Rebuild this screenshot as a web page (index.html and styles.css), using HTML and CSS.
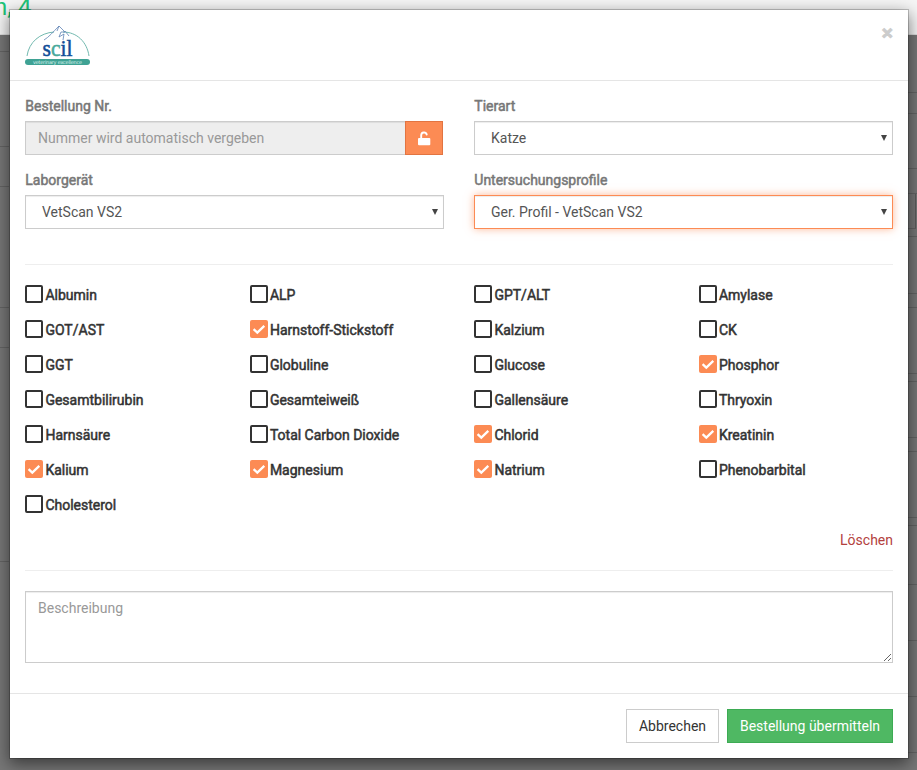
FILE: index.html
```
<!DOCTYPE html>
<html lang="de">
<head>
<meta charset="utf-8">
<title>Bestellung</title>
<link rel="stylesheet" href="styles.css">
</head>
<body>
<div class="page">
  <div class="page-top">n, 4</div>
  <div class="page-body">
    <div class="side side-left" id="left"></div>
    <div class="side side-right" id="right"></div>
  </div>
</div>
<div class="modal">
  <header class="modal-header">
    <svg class="logo" width="66" height="42" viewBox="0 0 66 42">
      <path d="M2 31C4 17 15 8 29 7M38 7C52 7 62 17 64 31" fill="none" stroke="#72b9af" stroke-width="1"/>
      <path d="M19 15C24 12 28 7 34 1L40 7L36 7L34 12L39 9L38 15M34 1L32 6M40 6L44 11" fill="none" stroke="#5f83b5" stroke-width=".8"/>
      <text x="17.5" y="30.5" class="logo-word" textLength="30" lengthAdjust="spacingAndGlyphs">s<tspan fill="#48a99b" stroke="#48a99b">c</tspan>il</text>
      <rect x="0" y="34" width="65" height="6" rx="3" fill="#3fa294"/>
      <text x="8" y="38.7" class="logo-sub" textLength="49">veterinary excellence</text>
    </svg>
    <span class="close">×</span>
  </header>
  <main class="modal-body">
    <div class="fields">
      <div class="field">
        <label>Bestellung Nr.</label>
        <div class="input-group">
          <div class="control disabled">Nummer wird automatisch vergeben</div>
          <button class="lock"><svg width="14" height="15" viewBox="0 0 14 15"><path d="M4.2 7V4.2a2.8 2.8 0 0 1 5.5-.6" fill="none" stroke="#fff" stroke-width="1.9" stroke-linecap="round"/><rect x="1" y="7" width="12.3" height="7.2" rx="1" fill="#fff"/></svg></button>
        </div>
      </div>
      <div class="field">
        <label>Tierart</label>
        <div class="control select">Katze<i></i></div>
      </div>
      <div class="field">
        <label>Laborgerät</label>
        <div class="control select">VetScan VS2<i></i></div>
      </div>
      <div class="field">
        <label>Untersuchungsprofile</label>
        <div class="control select focus">Ger. Profil - VetScan VS2<i></i></div>
      </div>
    </div>
    <hr>
    <div class="checks" id="checks"></div>
    <div class="clear"><a>Löschen</a></div>
    <hr class="second">
    <textarea placeholder="Beschreibung"></textarea>
  </main>
  <footer class="modal-footer">
    <button class="btn">Abbrechen</button>
    <button class="btn primary">Bestellung übermitteln</button>
  </footer>
</div>
<script src="app.js"></script>
</body>
</html>
```
FILE: app.js
```
const items = ["Albumin", "ALP", "GPT/ALT", "Amylase", "GOT/AST", "*Harnstoff-Stickstoff", "Kalzium", "CK",
  "GGT", "Globuline", "Glucose", "*Phosphor", "Gesamtbilirubin", "Gesamteiweiß", "Gallensäure", "Thryoxin",
  "Harnsäure", "Total Carbon Dioxide", "*Chlorid", "*Kreatinin", "*Kalium", "*Magnesium", "*Natrium", "Phenobarbital", "Cholesterol"];
const tick = '<svg width="18" height="18" viewBox="0 0 18 18"><path d="M3.6 9.1l3.7 3.5 7-6.7" fill="none" stroke="#fff" stroke-width="2.3"/></svg>';
document.getElementById("checks").innerHTML = items.map(t => {
  const on = t[0] === "*";
  return `<div class="check"><span class="box${on ? " on" : ""}">${on ? tick : ""}</span><span>${on ? t.slice(1) : t}</span></div>`;
}).join("");

// Row heights of the tables behind the dialog, each closed by a border.
const rows = (id, heights) => {
  document.getElementById(id).innerHTML = heights.map(h => `<div class="row${h === 35 ? " input-row" : ""}" style="height:${h}px"></div>`).join("");
};
rows("left", [17, 95, 40, 121, 40, 214]);
rows("right", [58, 21, 55, 25, 35, 8, 57, 14, 66, 8, 56, 14, 66, 8, 59, 56, 56, 56]);
```
FILE: styles.css
```
* { box-sizing: border-box; }
body { margin: 0; height: 770px; overflow: hidden; font: 14px/20px Roboto, sans-serif; color: #333; }
.page { height: 770px; background: #777; }
.page-top { height: 35px; background: #f5f5f5; color: #20c478; font-size: 24px; line-height: 14px; text-indent: -6px; border-bottom: 1px solid #ddd; overflow: hidden; }
.page-body { display: flex; justify-content: space-between; height: 735px; }
.side { width: 9px; }
.row { border-bottom: 1px solid #646464; }
.input-row { width: 8px; border-right: 1px solid #5c5c5c; }
.modal { position: absolute; left: 9px; top: 9px; width: 900px; height: 750px; background: #fff; background-clip: padding-box; border: 1px solid rgba(0,0,0,.2); box-shadow: 0 5px 15px rgba(0,0,0,.5); }
.modal-header { height: 71px; padding: 15px; border-bottom: 1px solid #e5e5e5; display: flex; justify-content: space-between; }
.logo { display: block; }
.logo-word { font: 24px "Liberation Serif", serif; fill: #0f4d97; stroke: #0f4d97; stroke-width: .5px; }
.logo-sub { font: 5px "DejaVu Sans", sans-serif; fill: #d9f0ec; }
.close { font: bold 21px/21px Roboto, sans-serif; color: #ccc; margin-top: -2px; -webkit-text-stroke: .8px #ccc; }
.modal-body { padding: 15px; height: 612px; }
.fields { display: grid; grid-template-columns: 419px 419px; column-gap: 30px; row-gap: 15px; }
.field { height: 59px; }
label { display: block; height: 20px; padding-left: .3px; margin-bottom: 5px; color: #777; -webkit-text-stroke: .5px #777; }
.control { height: 34px; padding: 6px 12px; border: 1px solid #ccc; box-shadow: inset 0 1px 1px rgba(0,0,0,.075); color: #555; }
.input-group { display: flex; width: 418px; }
.disabled { flex: 1; background: #eee; color: #999; border-right: 0; }
.lock { width: 38px; height: 34px; border: 1px solid #e27441; background: #fc8b54; padding: 0 1px 0 0; display: flex; align-items: center; justify-content: center; }
.select { display: flex; justify-content: space-between; align-items: center; padding: 0 5px 0 16px; }
.select i { border: 3.5px solid transparent; border-top: 6px solid #444; border-bottom: 0; }
.focus { border-color: #fc8b54; box-shadow: inset 0 1px 1px rgba(0,0,0,.075), 0 0 8px rgba(252,139,84,.6); }
hr { margin: 35px 0 20px; border: 0; border-top: 1px solid #eee; }
hr.second { margin: 20px 0; }
.checks { display: grid; grid-template-columns: repeat(4, 224.5px); grid-auto-rows: 35px; margin-right: -30px; }
.check { display: flex; height: 20px; gap: 2.4px; -webkit-text-stroke: .5px #333; }
.box { width: 18px; height: 18px; border: 2px solid #333; border-radius: 2px; }
.box.on { border: 0; background: #fc8b54; }
.box svg { display: block; }
.clear { text-align: right; color: #b3413e; height: 20px; }
textarea { display: block; width: 868px; height: 72px; padding: 6px 12px; border: 1px solid #ccc; box-shadow: inset 0 1px 1px rgba(0,0,0,.075); font: inherit; outline: 0; }
textarea::placeholder { color: #999; }
.modal-footer { height: 65px; border-top: 1px solid #e5e5e5; padding: 15px; display: flex; justify-content: flex-end; gap: 8px; }
.btn { width: 93px; height: 34px; padding: 0; border: 1px solid #ccc; background: #fff; color: #333; font: inherit; }
.primary { width: 166px; background: #4fb863; border-color: #3dab54; color: #fff; }
```
